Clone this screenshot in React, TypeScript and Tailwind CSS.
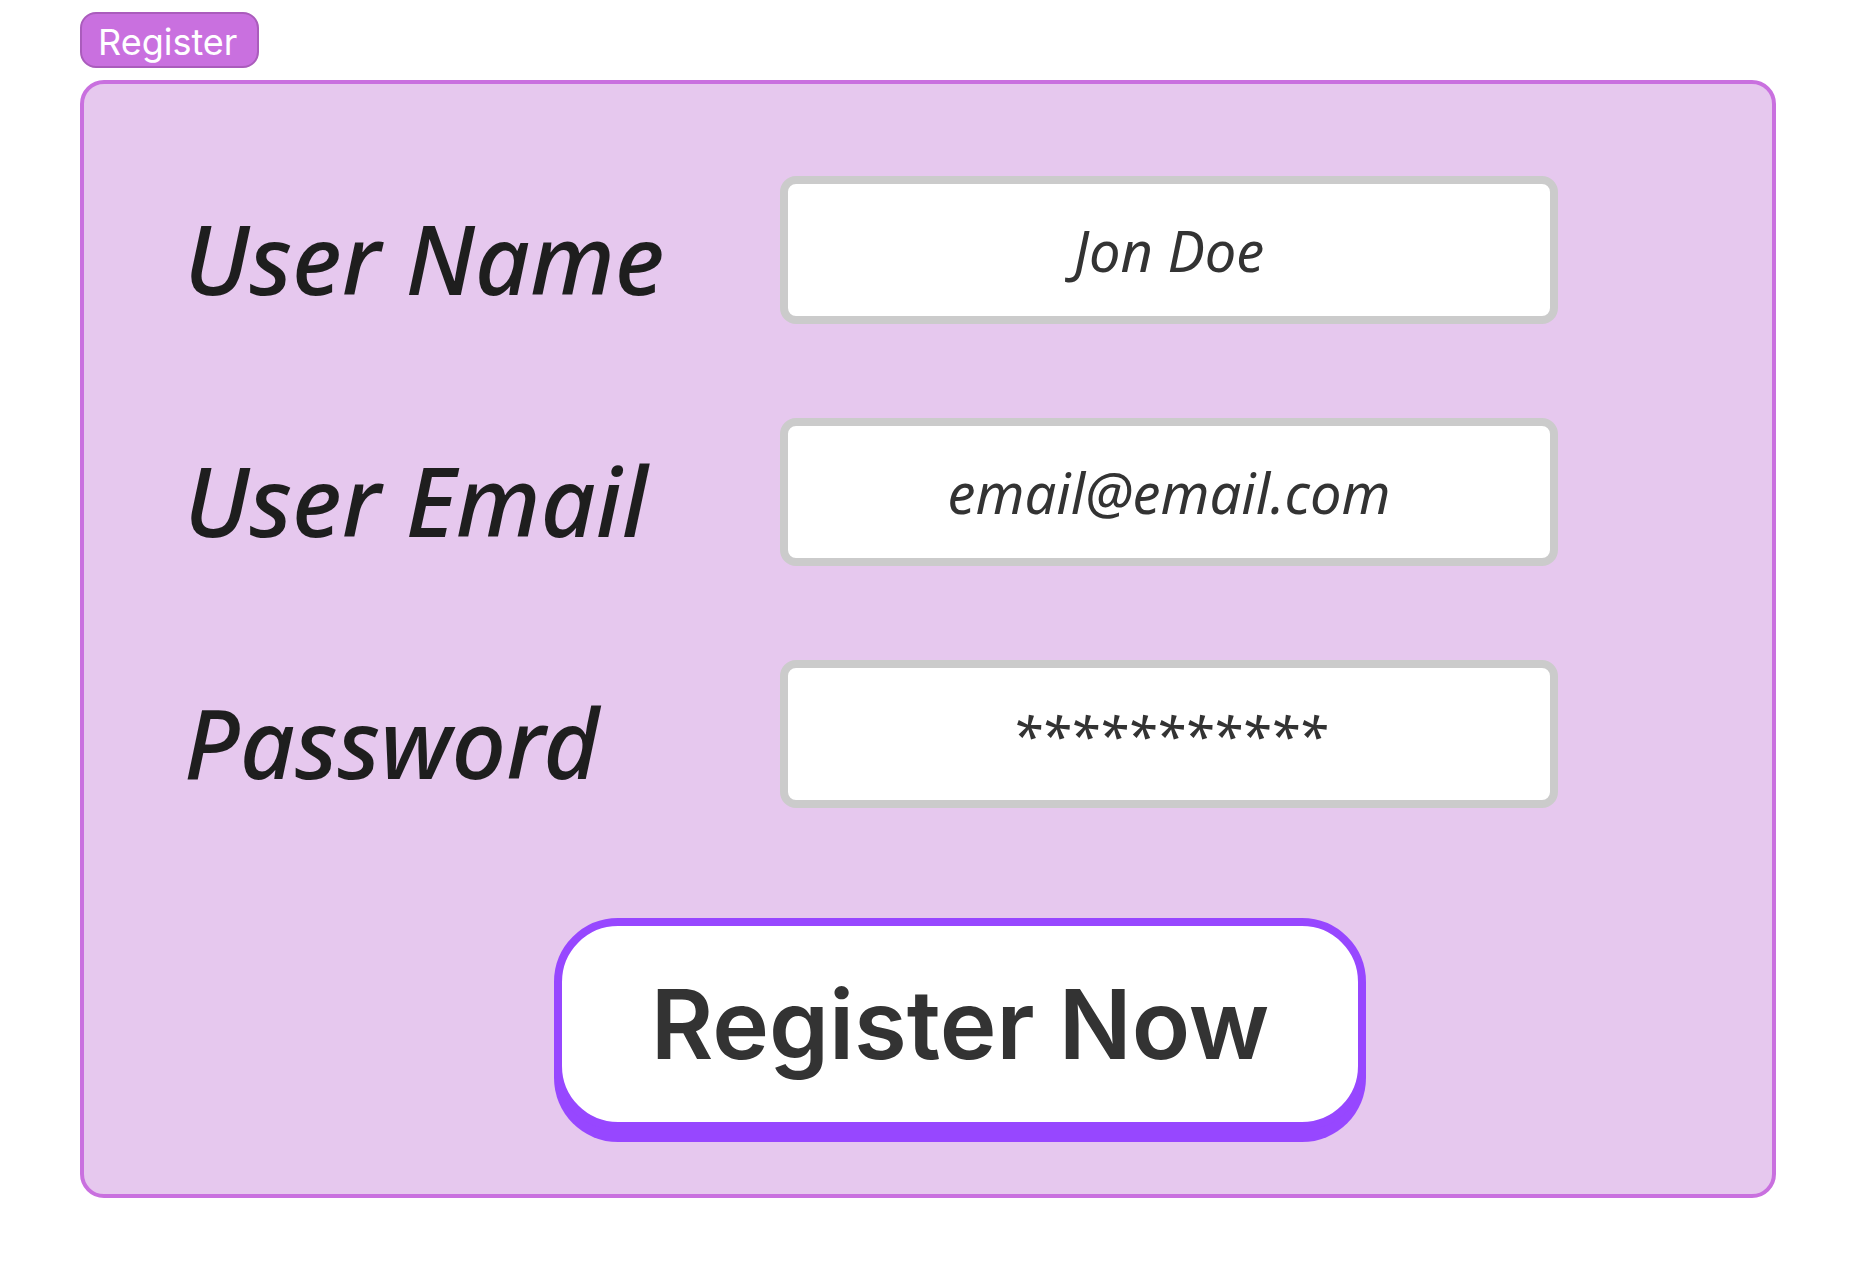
const fields = [
  { id: "username", label: "User Name", type: "text", placeholder: "Jon Doe", size: "text-[56px]" },
  { id: "email", label: "User Email", type: "email", placeholder: "email@email.com", size: "text-[56px]" },
  { id: "password", label: "Password", type: "password", placeholder: "***********", size: "text-[52px] font-medium" },
];

export default function App() {
  return (
    <main className="min-h-screen bg-white px-20 pt-3 pb-20 font-['Inter',sans-serif]">
      <h1 className="flex h-14 w-fit items-center rounded-2xl border-2 border-[#aa5cbc] bg-[#c970df] pt-1 pr-[20px] pl-4 text-[36px] leading-none font-normal text-white">
        Register
      </h1>
      <form
        className="mt-3 rounded-3xl border-4 border-[#c970df] bg-[#e6c8ee] pt-[92px] pb-[52px]"
        onSubmit={(event) => event.preventDefault()}
      >
        <div className="grid gap-[94px] pr-[214px] pl-[100px] font-['Noto_Sans',sans-serif] italic">
          {fields.map((field) => (
            <div key={field.id} className="grid grid-cols-[596fr_778fr] items-center">
              <label htmlFor={field.id} className="pt-4 text-[96px] leading-none font-medium whitespace-nowrap text-[#1e1e1e]">
                {field.label}
              </label>
              <input
                id={field.id}
                type={field.type}
                placeholder={field.placeholder}
                className={`${field.size} h-[148px] w-full min-w-0 rounded-2xl border-8 border-[#cbcbcb] bg-white text-center text-[#333333] outline-none placeholder:text-[#333333] placeholder:opacity-100`}
              />
            </div>
          ))}
        </div>
        <div className="mt-[110px] flex justify-center pb-3 pl-16">
          <button
            type="submit"
            className="h-[212px] rounded-[64px] border-8 border-[#9747ff] bg-white px-[89px] text-[96px] leading-none font-semibold whitespace-nowrap text-[#333333] shadow-[0_12px_0_#9747ff]"
          >
            Register Now
          </button>
        </div>
      </form>
    </main>
  );
}
